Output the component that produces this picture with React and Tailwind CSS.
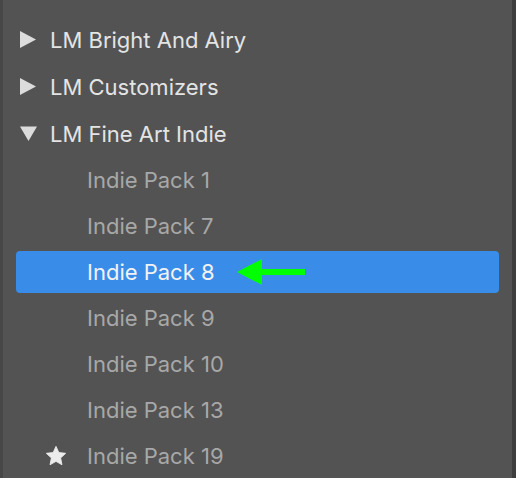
const groups = [
  { name: 'LM Bright And Airy', open: false },
  { name: 'LM Customizers', open: false },
  { name: 'LM Fine Art Indie', open: true },
]

const packs = [
  { name: 'Indie Pack 1' },
  { name: 'Indie Pack 7' },
  { name: 'Indie Pack 8', selected: true },
  { name: 'Indie Pack 9' },
  { name: 'Indie Pack 10' },
  { name: 'Indie Pack 13' },
  { name: 'Indie Pack 19', starred: true },
]

function Triangle({ open }) {
  return (
    <svg width="17" height="17" viewBox="0 0 17 17" className="shrink-0">
      {open
        ? <polygon points="0,1.5 17,1.5 8.5,16" fill="#dcdcdc" />
        : <polygon points="0,0 16,8.5 0,17" fill="#dcdcdc" />}
    </svg>
  )
}

function Star() {
  return (
    <svg width="22" height="22" viewBox="0 0 24 24" className="shrink-0">
      <polygon
        points="12,1.5 15.1,8.3 22.5,9.1 17,14.1 18.5,21.5 12,17.8 5.5,21.5 7,14.1 1.5,9.1 8.9,8.3"
        fill="#ececec"
        stroke="#ececec"
        strokeWidth="1"
        strokeLinejoin="round"
      />
    </svg>
  )
}

function Arrow() {
  return (
    <svg width="70" height="26" viewBox="0 0 70 26" className="shrink-0 ml-[22px]">
      <polygon points="0,13 25,0 25,10 68,10 68,16 25,16 25,26" fill="#00ff00" />
    </svg>
  )
}

export default function App() {
  return (
    <div className="flex w-[516px] h-[478px] overflow-hidden bg-[#535353]" style={{ fontFamily: 'Inter, "Liberation Sans", sans-serif' }}>
      <div className="w-[3px] shrink-0 bg-[#474747]" />
      <div className="flex-1 flex flex-col pt-[16px]">
        {groups.map(g => (
          <div key={g.name} className="h-[47px] flex items-center pl-[17px] shrink-0">
            <span className="w-[17px] flex justify-center"><Triangle open={g.open} /></span>
            <span className="ml-[13px] text-[22px] text-[#e4e4e4] leading-none">{g.name}</span>
          </div>
        ))}
        {packs.map(p => (
          <div key={p.name} className="h-[46px] shrink-0 flex flex-col justify-center">
            <div className={`h-[42px] flex items-center mx-[13px] rounded-[4px] ${p.selected ? 'bg-[#3a8ce9]' : ''}`}>
              <span className="w-[22px] ml-[29px] flex justify-center">{p.starred && <Star />}</span>
              <span className={`ml-[20px] text-[22px] leading-none ${p.selected ? 'text-[#f2f2f2]' : 'text-[#a8a8a8]'}`}>{p.name}</span>
              {p.selected && <Arrow />}
            </div>
          </div>
        ))}
      </div>
      <div className="w-[4px] shrink-0 bg-[#3e3e3e]" />
    </div>
  )
}
